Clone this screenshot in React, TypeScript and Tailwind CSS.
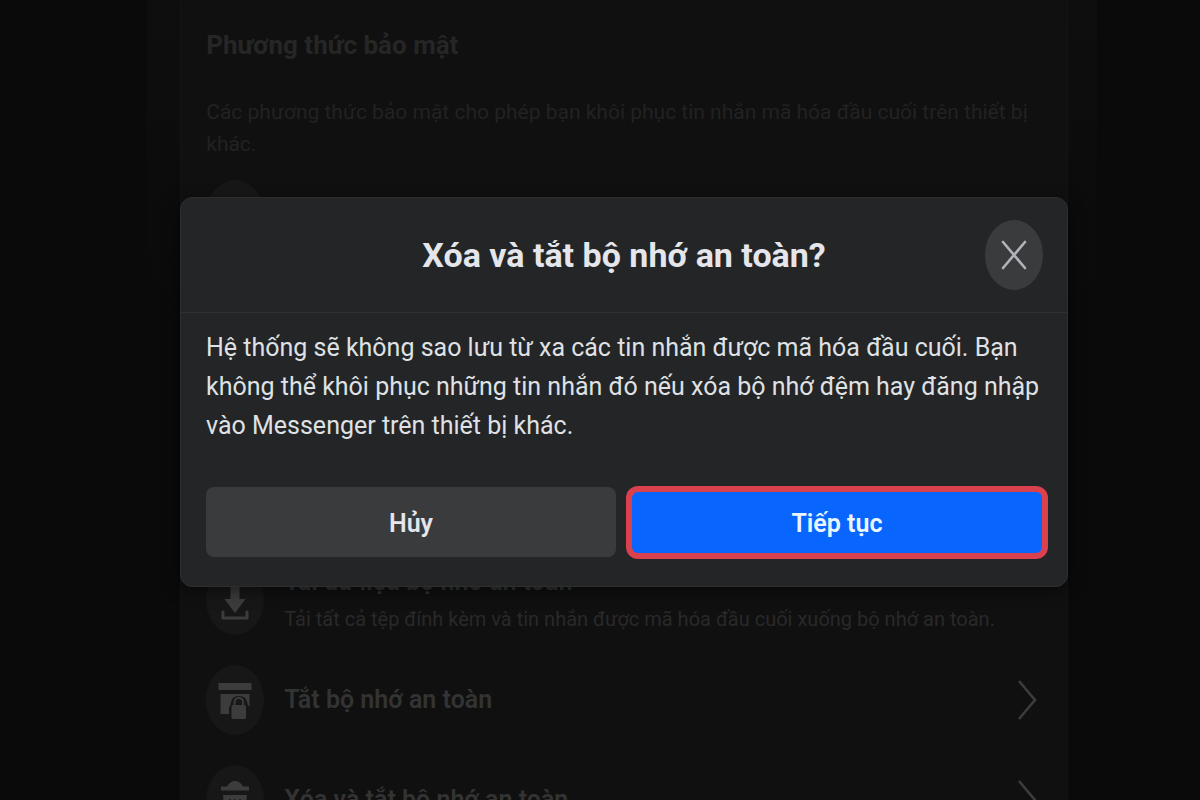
import type { ReactNode } from 'react';

const ChevronIcon = () => (
  <svg viewBox="0 0 20 42" className="mr-1 h-[42px] w-5 shrink-0" fill="none" aria-hidden="true">
    <path d="M1 2 L17 21 L1 40" stroke="#3c3c3c" strokeWidth="2.6" />
  </svg>
);

const DownloadIcon = () => (
  <svg viewBox="0 0 34 40" className="h-10 w-[34px]" fill="#3c3c3c" aria-hidden="true">
    <path d="M12.500 0h9v19h6L17 33 6.500 19h6z" />
    <path d="M5 32v6h24v-6" fill="none" stroke="#3c3c3c" strokeWidth="3" strokeLinecap="round" strokeLinejoin="round" />
  </svg>
);

const ArchiveLockIcon = () => (
  <svg viewBox="0 0 34 40" className="h-10 w-[34px]" fill="#3c3c3c" aria-hidden="true">
    <rect x="0.500" y="3" width="33" height="7" />
    <path d="M2.500 14h29v20h-29z" />
    <path d="M11 40V27q2-2 2-5 1-6 8-6t8 6q0 3 3 5h2v13z" fill="#171717" />
    <rect x="13.500" y="25" width="14.500" height="14" rx="1.500" />
    <path d="M16.500 26v-3q0-5 4.300-5t4.300 5v3" fill="none" stroke="#3c3c3c" strokeWidth="2" />
  </svg>
);

const TrashIcon = () => (
  <svg viewBox="0 0 34 40" className="h-10 w-[34px]" fill="#3c3c3c" aria-hidden="true">
    <path d="M3 6.500h6q3-5.500 8-5.500t8 5.500h6v4H3z" />
    <path d="M5 15h24l-2 23H7z" />
    <path d="M12 19v15M17 19v15M22 19v15" stroke="#171717" strokeWidth="1.500" />
  </svg>
);

const rows = [
  {
    title: 'Tải dữ liệu bộ nhớ an toàn',
    detail: 'Tải tất cả tệp đính kèm và tin nhắn được mã hóa đầu cuối xuống bộ nhớ an toàn.',
    icon: <DownloadIcon />,
    chevron: false,
  },
  { title: 'Tắt bộ nhớ an toàn', icon: <ArchiveLockIcon />, chevron: true },
  { title: 'Xóa và tắt bộ nhớ an toàn', icon: <TrashIcon />, chevron: true },
];

function IconBadge({ children }: { children?: ReactNode }) {
  return (
    <span className="flex h-[70px] w-[58px] shrink-0 items-center justify-center rounded-[50%] bg-[#171717]">
      {children}
    </span>
  );
}

function SettingsPage() {
  return (
    <div className="h-full bg-[#0a0a0a] pr-[8.6%] pl-[12.25%]" aria-hidden="true">
      <div className="h-full bg-linear-to-b from-[#0e0e0e] to-[#0a0a0a] to-40% pr-[3%] pl-[3.5%]">
        <main className="h-full border-x border-[#141414] bg-[#101010] px-[25px] pt-6">
          <h2 className="text-[26px] leading-[42px] font-bold text-[#262626]">Phương thức bảo mật</h2>
          <p className="mt-[30px] text-[21px] leading-8 text-[#222222]">
            Các phương thức bảo mật cho phép bạn khôi phục tin nhắn mã hóa đầu cuối trên thiết bị khác.
          </p>
          <div className="mt-5">
            <IconBadge />
          </div>
          <ul className="mt-[300px]">
            {rows.map((row) => (
              <li key={row.title} className="flex h-[100px] items-center gap-5">
                <IconBadge>{row.icon}</IconBadge>
                <div className="min-w-0 flex-1">
                  <p className="text-[25px] leading-[38px] font-semibold whitespace-nowrap text-[#333333]">
                    {row.title}
                  </p>
                  {row.detail && <p className="text-xl leading-9 whitespace-nowrap text-[#292929]">{row.detail}</p>}
                </div>
                {row.chevron && <ChevronIcon />}
              </li>
            ))}
          </ul>
        </main>
      </div>
    </div>
  );
}

function ConfirmDialog() {
  return (
    <div
      role="dialog"
      aria-modal="true"
      aria-labelledby="dialog-title"
      className="w-full rounded-xl border border-[#2d2e2f] bg-[#242526] shadow-[0_4px_16px_rgba(0,0,0,0.5)]"
    >
      <header className="grid grid-cols-[58px_1fr_58px] items-center border-b border-[#303132] px-6 py-[22px]">
        <h1 id="dialog-title" className="col-start-2 text-center text-[34px] leading-10 font-bold text-[#e4e6eb]">
          Xóa và tắt bộ nhớ an toàn?
        </h1>
        <button
          type="button"
          aria-label="Đóng"
          className="flex h-[70px] w-[58px] items-center justify-center rounded-[50%] bg-[#3a3b3c]"
        >
          <svg viewBox="0 0 26 30" className="h-[30px] w-[26px]" fill="none" aria-hidden="true">
            <path d="M2 2 L24 28 M24 2 L2 28" stroke="#b0b3b8" strokeWidth="2.6" strokeLinecap="round" />
          </svg>
        </button>
      </header>
      <div className="px-[25px] pt-[15px] pb-[29px]">
        <p className="text-[25px] leading-[39px] text-[#dfe1e5]">
          Hệ thống sẽ không sao lưu từ xa các tin nhắn được mã hóa đầu cuối. Bạn không thể khôi phục những tin nhắn
          đó nếu xóa bộ nhớ đệm hay đăng nhập vào Messenger trên thiết bị khác.
        </p>
        <div className="mt-[42px] grid grid-cols-2 items-center gap-4">
          <button
            type="button"
            className="h-[70px] rounded-lg bg-[#3a3b3c] pt-[3px] text-[25px] font-semibold text-[#e4e6eb]"
          >
            Hủy
          </button>
          <button
            type="button"
            className="h-[61px] rounded-md bg-[#0866ff] pt-[3px] text-[25px] font-semibold text-[#e9f6ff] ring-6 ring-[#d9414f]"
          >
            Tiếp tục
          </button>
        </div>
      </div>
    </div>
  );
}

export default function App() {
  return (
    <div className="relative h-screen overflow-hidden font-[Roboto,'Noto_Sans',sans-serif]">
      <SettingsPage />
      <div className="absolute inset-0 flex items-start pt-[197px] pr-[11%] pl-[15%]">
        <ConfirmDialog />
      </div>
    </div>
  );
}
